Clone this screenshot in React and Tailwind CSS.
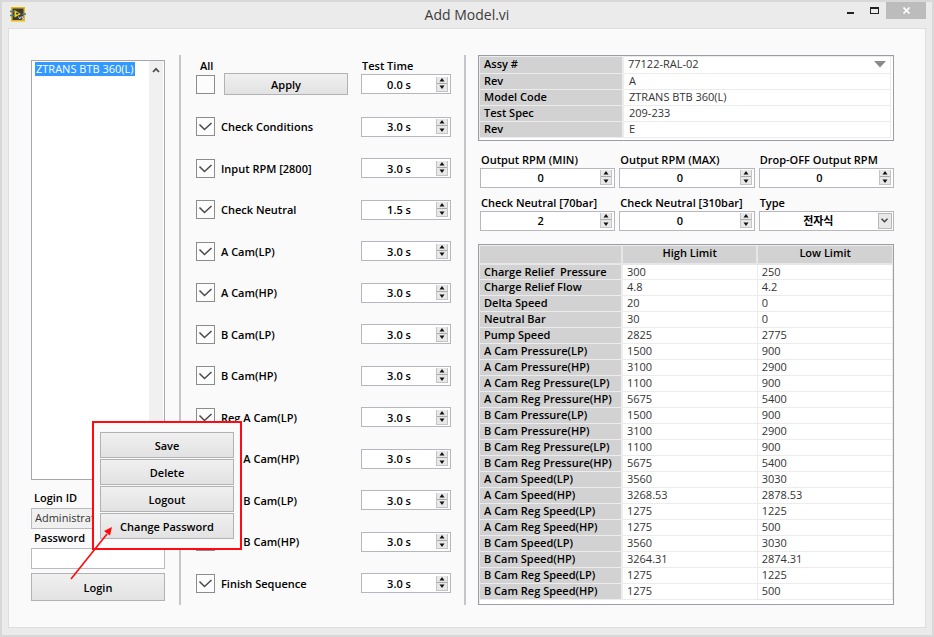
import React from "react";

const STEPS = [
  { label: "Check Conditions", time: "3.0 s" },
  { label: "Input RPM [2800]", time: "3.0 s" },
  { label: "Check Neutral", time: "1.5 s" },
  { label: "A Cam(LP)", time: "3.0 s" },
  { label: "A Cam(HP)", time: "3.0 s" },
  { label: "B Cam(LP)", time: "3.0 s" },
  { label: "B Cam(HP)", time: "3.0 s" },
  { label: "Reg A Cam(LP)", time: "3.0 s" },
  { label: "Reg A Cam(HP)", time: "3.0 s" },
  { label: "Reg B Cam(LP)", time: "3.0 s" },
  { label: "Reg B Cam(HP)", time: "3.0 s" },
  { label: "Finish Sequence", time: "3.0 s" },
];

const SPEC = [
  ["Rev", "A"],
  ["Model Code", "ZTRANS BTB 360(L)"],
  ["Test Spec", "209-233"],
  ["Rev", "E"],
];

const FIELDS = [
  { id: "rpm-min", label: "Output RPM (MIN)", value: "0" },
  { id: "rpm-max", label: "Output RPM (MAX)", value: "0" },
  { id: "drop-off", label: "Drop-OFF Output RPM", value: "0" },
  { id: "neutral-70", label: "Check Neutral [70bar]", value: "2" },
  { id: "neutral-310", label: "Check Neutral [310bar]", value: "0" },
];

const LIMITS = [
  ["Charge Relief  Pressure", "300", "250"],
  ["Charge Relief Flow", "4.8", "4.2"],
  ["Delta Speed", "20", "0"],
  ["Neutral Bar", "30", "0"],
  ["Pump Speed", "2825", "2775"],
  ["A Cam Pressure(LP)", "1500", "900"],
  ["A Cam Pressure(HP)", "3100", "2900"],
  ["A Cam Reg Pressure(LP)", "1100", "900"],
  ["A Cam Reg Pressure(HP)", "5675", "5400"],
  ["B Cam Pressure(LP)", "1500", "900"],
  ["B Cam Pressure(HP)", "3100", "2900"],
  ["B Cam Reg Pressure(LP)", "1100", "900"],
  ["B Cam Reg Pressure(HP)", "5675", "5400"],
  ["A Cam Speed(LP)", "3560", "3030"],
  ["A Cam Speed(HP)", "3268.53", "2878.53"],
  ["A Cam Reg Speed(LP)", "1275", "1225"],
  ["A Cam Reg Speed(HP)", "1275", "500"],
  ["B Cam Speed(LP)", "3560", "3030"],
  ["B Cam Speed(HP)", "3264.31", "2874.31"],
  ["B Cam Reg Speed(LP)", "1275", "1225"],
  ["B Cam Reg Speed(HP)", "1275", "500"],
];

const Button = ({ children, className = "" }) => (
  <button
    type="button"
    className={`border border-[#b2b2b4] bg-linear-to-b from-[#f0f0f0] to-[#e2e2e2] text-center font-semibold ${className}`}
  >
    {children}
  </button>
);

const Spinner = ({ id, value, label }) => (
  <div className="flex h-5 w-full items-center border border-[#b6b7be] bg-white pr-[2px]">
    <input
      id={id}
      type="text"
      defaultValue={value}
      aria-label={label}
      className="w-full min-w-0 flex-1 text-center font-semibold outline-none"
    />
    <div className="flex w-3 flex-col border-x border-b border-[#c4c4c4] bg-[#e8e8e8]">
      <button type="button" aria-label="Increase" className="flex h-[7px] items-center justify-center border-b border-[#a8a8a8]">
        <svg width="6" height="4" viewBox="0 0 6 4">
          <path d="M3 0L5.5 3.5H0.5Z" fill="#111" />
        </svg>
      </button>
      <button type="button" aria-label="Decrease" className="flex h-[7px] items-center justify-center">
        <svg width="6" height="4" viewBox="0 0 6 4">
          <path d="M0.5 0.5H5.5L3 4Z" fill="#111" />
        </svg>
      </button>
    </div>
  </div>
);

const CheckBox = ({ id, checked }) => (
  <span className="relative block size-[19px] shrink-0">
    <input
      id={id}
      type="checkbox"
      defaultChecked={checked}
      className="peer block size-full appearance-none border border-[#8c8c8c] bg-[#fcfcfc]"
    />
    <svg
      className="pointer-events-none absolute inset-0 hidden peer-checked:block"
      width="19"
      height="19"
      viewBox="0 0 19 19"
      fill="none"
      stroke="#4a4a4a"
      strokeWidth="1.5"
    >
      <path d="M3.5 7.5L8.5 12.5L15.5 6" />
    </svg>
  </span>
);

const TitleBar = () => (
  <header className="grid h-[26px] grid-cols-[1fr_auto_1fr] items-start">
    <svg className="mt-[5px] ml-[8px]" width="16" height="15" viewBox="0 0 16 15">
      <rect x="1.75" y="0.75" width="12.5" height="13" fill="#3b3a36" stroke="#e8b90d" strokeWidth="1.5" />
      <path d="M0 4.5H4M0 8.5H4M12 7H16" stroke="#3d74a8" strokeWidth="1.5" />
      <path d="M4.5 3L11 7L4.5 10.5Z" fill="#f5d21f" />
      <path d="M6 6.5H8.5M7.2 5.4V7.8" stroke="#3b3a36" />
      <path d="M8.5 9.5L9.7 12L11 9.5M13.5 9.8H12V11H13.3V12.3H11.7" fill="none" stroke="#eee" strokeWidth="0.8" />
    </svg>
    <h1 className="mt-[3px] text-sm leading-5 text-[#3c3c3c]">Add Model.vi</h1>
    <div className="mr-[6px] flex justify-end">
      <button type="button" aria-label="Minimize" className="flex h-[17px] w-6 justify-center pt-[10px]">
        <span className="h-[2px] w-[7px] bg-[#222]" />
      </button>
      <button type="button" aria-label="Maximize" className="flex h-[17px] w-6 justify-center pt-[5px]">
        <span className="h-[7px] w-[9px] border border-t-2 border-[#222]" />
      </button>
      <button type="button" aria-label="Close" className="flex h-[17px] w-10 items-center justify-center bg-[#bcbcbc]">
        <svg width="7" height="7" viewBox="0 0 7 7" stroke="#fff" strokeWidth="1.6">
          <path d="M0.5 0.5L6.5 6.5M6.5 0.5L0.5 6.5" />
        </svg>
      </button>
    </div>
  </header>
);

const ModelPanel = () => (
  <aside className="relative flex w-[134px] shrink-0 flex-col pt-[5px] pb-1">
    <div className="flex flex-1 border border-[#a4a6b0] bg-white pr-px">
      <ul role="listbox" aria-label="Models" className="flex-1 pt-px pl-[3px]">
        <li role="option" aria-selected="true" className="w-max bg-[#3399ff] px-px leading-[14px] text-white">
          ZTRANS BTB 360(L)
        </li>
      </ul>
      <div className="flex w-[14px] justify-center bg-[#f0f0f0] pt-[6px]">
        <svg width="8" height="6" viewBox="0 0 8 6" fill="none" stroke="#505050" strokeWidth="1.8">
          <path d="M1 5L4 1.8L7 5" />
        </svg>
      </div>
    </div>
    <label htmlFor="login-id" className="mt-[10px] mb-[2px] ml-[3px] font-semibold leading-4">
      Login ID
    </label>
    <input
      id="login-id"
      type="text"
      defaultValue="Administrator"
      className="h-[21px] border border-[#b9bac2] bg-[#f0f0f0] px-[3px] pb-[2px] text-[#333]"
    />
    <label htmlFor="password" className="mt-px mb-[2px] ml-[3px] font-semibold leading-4">
      Password
    </label>
    <input id="password" type="password" className="h-[21px] border border-[#b9bac2] bg-white px-[3px]" />
    <Button className="mt-1 h-7">Login</Button>

    {/* account menu opened over the form */}
    <div className="absolute top-[366px] left-[61px] z-10 flex w-[150px] flex-col gap-px border-2 border-[#ff0a12] bg-[#fafafa] px-[6px] pt-[9px] pb-[9px]">
      <Button className="h-[26px]">Save</Button>
      <Button className="h-[26px]">Delete</Button>
      <Button className="h-[26px]">Logout</Button>
      <Button className="h-[26px]">Change Password</Button>
    </div>
    <svg className="absolute top-[469px] left-[36px] z-20" width="50" height="60" viewBox="0 0 50 60">
      <path d="M4 55L40 10" stroke="#ff0a0a" strokeWidth="1.6" />
      <path d="M45 3L43 11.5L37 7Z" fill="#ff0a0a" />
    </svg>
  </aside>
);

const StepPanel = () => (
  <section className="flex w-[255px] shrink-0 flex-col pb-3">
    <div className="flex h-[18px] items-center pt-[2px] font-semibold">
      <label htmlFor="all" className="ml-1 flex-1">
        All
      </label>
      <label htmlFor="time-all" className="w-[89px]">
        Test Time
      </label>
    </div>
    <div className="flex flex-1 flex-col justify-between">
      <div className="flex items-center">
        <CheckBox id="all" checked={false} />
        <Button className="mr-[13px] ml-[9px] h-[22px] flex-1">Apply</Button>
        <div className="w-[90px]">
          <Spinner id="time-all" value="0.0 s" />
        </div>
      </div>
      {STEPS.map((step, i) => (
        <div className="flex items-center" key={step.label}>
          <CheckBox id={`step-${i}`} checked />
          <label htmlFor={`step-${i}`} className="ml-[6px] flex-1 font-semibold">
            {step.label}
          </label>
          <div className="w-[90px]">
            <Spinner value={step.time} label={`${step.label} time`} />
          </div>
        </div>
      ))}
    </div>
  </section>
);

const SpecTable = () => (
  <div className="border border-[#9a9ca6] bg-[#ececec] pt-px pl-px">
    <div className="bg-white pr-[2px] pb-[2px]">
      <table className="w-full table-fixed border-collapse leading-[14px]">
        <tbody>
          <tr className="h-4">
            <th className="w-[143px] border-r-2 border-b border-[#ececec] bg-[#d2d2d2] pl-1 text-left align-top font-semibold">
              <label htmlFor="assy">Assy #</label>
            </th>
            <td className="border-r border-b border-[#ececec] pl-1 align-top">
              <div className="relative">
                <select id="assy" className="block h-[14px] w-full appearance-none bg-transparent text-[#333] outline-none">
                  <option>77122-RAL-02</option>
                </select>
                <svg className="pointer-events-none absolute top-1 right-1" width="12" height="7" viewBox="0 0 12 7">
                  <path d="M0 0H12L6 6.5Z" fill="#8a8a8a" />
                </svg>
              </div>
            </td>
          </tr>
          {SPEC.map(([name, value], i) => (
            <tr className="h-4" key={i}>
              <th className="border-r-2 border-b border-[#ececec] bg-[#d2d2d2] pl-1 text-left align-top font-semibold">{name}</th>
              <td className="border-r border-b border-[#ececec] pl-[5px] align-top text-[#333]">{value}</td>
            </tr>
          ))}
        </tbody>
      </table>
    </div>
  </div>
);

const LimitTable = () => (
  <div className="border border-[#9a9ca6] bg-[#ececec] pt-px pl-px">
    <div className="bg-white pb-[4px]">
      <table className="w-full table-fixed border-collapse leading-[14px]">
        <thead>
          <tr className="h-[18px] bg-[#d2d2d2]">
            <th className="w-[142px] border-r-2 border-b-2 border-[#e6e6e6]" />
            <th className="border-r-2 border-b-2 border-[#e6e6e6] align-top font-semibold">High Limit</th>
            <th className="border-r border-b-2 border-[#e6e6e6] align-top font-semibold">Low Limit</th>
          </tr>
        </thead>
        <tbody>
          {LIMITS.map(([name, high, low]) => (
            <tr className="h-4" key={name}>
              <th className="border-r-2 border-b border-[#ececec] bg-[#d2d2d2] pl-1 text-left align-top font-semibold whitespace-pre">{name}</th>
              <td className="border-r border-b border-[#ececec] pl-1 align-top text-[#333]">{high}</td>
              <td className="border-r border-b border-[#ececec] pl-1 align-top text-[#333]">{low}</td>
            </tr>
          ))}
        </tbody>
      </table>
    </div>
  </div>
);

const App = () => {
  return (
    <div className="flex min-h-screen flex-col border-2 border-[#d8d8d8] bg-[#ebebeb] font-['Open_Sans','Noto_Sans_CJK_KR',sans-serif] text-[11px] leading-[15px] text-black">
      <TitleBar />
      <main className="mx-[6px] mb-[7px] flex flex-1 items-start border border-[#dedede] bg-[#fafafa] pt-[26px] pr-[31px] pb-[22px] pl-[22px]">
        <div className="flex min-w-0 flex-1 items-stretch">
          <ModelPanel />
          <div className="mr-[15px] ml-[14px] w-[2px] shrink-0 bg-[#c6c6c8]" />
          <StepPanel />
          <div className="mr-3 ml-[13px] w-[2px] shrink-0 bg-[#c6c6c8]" />
          <section className="min-w-0 flex-1">
            <SpecTable />
            <div className="mt-[11px] mb-[13px] grid grid-cols-3 gap-x-1 gap-y-[7px] pl-[2px]">
              {FIELDS.map((field) => (
                <div key={field.id}>
                  <label htmlFor={field.id} className="block pl-px leading-4 font-semibold whitespace-nowrap">
                    {field.label}
                  </label>
                  <Spinner id={field.id} value={field.value} />
                </div>
              ))}
              <div>
                <label htmlFor="type" className="block pl-px leading-4 font-semibold">
                  Type
                </label>
                <div className="relative">
                  <select
                    id="type"
                    className="block h-5 w-full appearance-none border border-[#b6b7be] bg-white pr-4 text-center font-semibold [text-align-last:center]"
                  >
                    <option>전자식</option>
                  </select>
                  <span className="pointer-events-none absolute inset-y-[2px] right-[2px] flex w-[14px] items-center justify-center border border-[#b8b8b8] bg-[#e8e8e8]">
                    <svg width="7" height="5" viewBox="0 0 7 5" fill="none" stroke="#444" strokeWidth="1.5">
                      <path d="M0.5 0.8L3.5 3.8L6.5 0.8" />
                    </svg>
                  </span>
                </div>
              </div>
            </div>
            <LimitTable />
          </section>
        </div>
      </main>
    </div>
  );
};

export default App;
